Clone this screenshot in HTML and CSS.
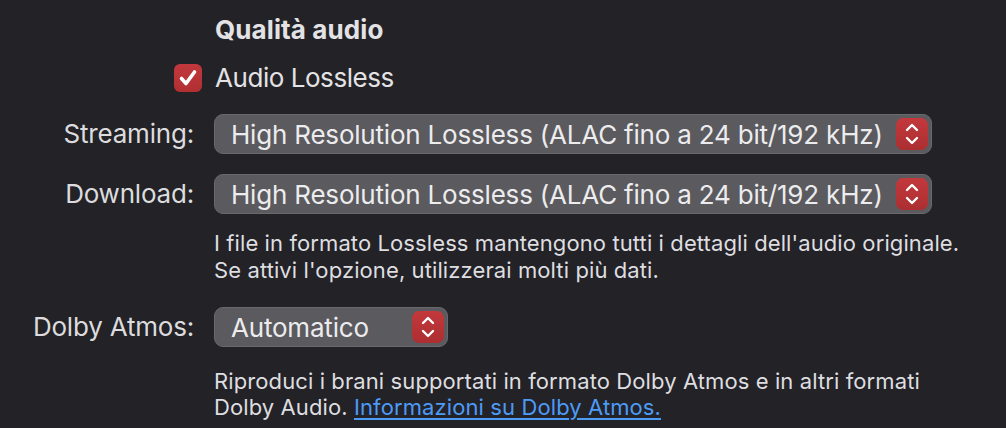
FILE: index.html
```html
<!DOCTYPE html>
<html lang="it">
<head>
<meta charset="utf-8">
<title>Qualità audio</title>
<link rel="stylesheet" href="styles.css">
</head>
<body>
<div class="form">
  <div class="label"></div>
  <div class="heading">Qualità audio</div>

  <div class="label check-cell">
    <span class="checkbox">
      <svg viewBox="0 0 28 28" width="28" height="28"><path d="M7.5 14.5 L12 19.5 L20.5 8" fill="none" stroke="#fff" stroke-width="3.6" stroke-linecap="round" stroke-linejoin="round"/></svg>
    </span>
  </div>
  <div class="check-text">Audio Lossless</div>

  <div class="label row-stream">Streaming:</div>
  <div class="popup wide row-stream"><span class="popup-text">High Resolution Lossless (ALAC fino a 24 bit/192 kHz)</span><span class="stepper"><svg viewBox="0 0 32 32" width="32" height="32"><path d="M11 12 L16 7 L21 12 M11 20 L16 25 L21 20" fill="none" stroke="#fff" stroke-width="2.4" stroke-linecap="round" stroke-linejoin="round"/></svg></span></div>

  <div class="label row-dl">Download:</div>
  <div class="popup wide row-dl"><span class="popup-text">High Resolution Lossless (ALAC fino a 24 bit/192 kHz)</span><span class="stepper"><svg viewBox="0 0 32 32" width="32" height="32"><path d="M11 12 L16 7 L21 12 M11 20 L16 25 L21 20" fill="none" stroke="#fff" stroke-width="2.4" stroke-linecap="round" stroke-linejoin="round"/></svg></span></div>

  <div class="label"></div>
  <p class="desc desc-lossless">I file in formato Lossless mantengono tutti i dettagli dell'audio originale.<br>Se attivi l'opzione, utilizzerai molti più dati.</p>

  <div class="label row-dolby">Dolby Atmos:</div>
  <div class="popup narrow row-dolby"><span class="popup-text">Automatico</span><span class="stepper"><svg viewBox="0 0 32 32" width="32" height="32"><path d="M11 12 L16 7 L21 12 M11 20 L16 25 L21 20" fill="none" stroke="#fff" stroke-width="2.4" stroke-linecap="round" stroke-linejoin="round"/></svg></span></div>

  <div class="label"></div>
  <p class="desc desc-dolby">Riproduci i brani supportati in formato Dolby Atmos e in altri formati<br>Dolby Audio. <a href="#" class="link">Informazioni su Dolby Atmos.</a></p>
</div>
</body>
</html>
```

FILE: styles.css
```css
html, body {
  margin: 0;
  padding: 0;
  background: #232227;
  height: 100%;
  overflow: hidden;
}

body {
  font-family: Inter, "Noto Sans", "DejaVu Sans", sans-serif;
  color: #e3e3e5;
  font-size: 26px;
  -webkit-font-smoothing: antialiased;
}

.form {
  display: grid;
  grid-template-columns: 194px 1fr;
  column-gap: 20px;
  align-items: center;
  padding-top: 14px;
}

.label {
  text-align: right;
  color: #dcdcde;
  line-height: 40px;
  letter-spacing: -0.2px;
}

.heading {
  font-size: 26px;
  font-weight: 700;
  line-height: 32px;
  padding-left: 1px;
  letter-spacing: 0.1px;
}

.check-cell {
  display: flex;
  justify-content: flex-end;
  margin-top: 18px;
  line-height: 0;
}

.checkbox {
  width: 28px;
  height: 28px;
  border-radius: 6px;
  background: linear-gradient(#c2383c, #b02f33);
  margin-right: -8px;
  display: block;
}

.checkbox svg {
  display: block;
}

.check-text {
  margin-top: 18px;
  line-height: 28px;
  padding-left: 1px;
  letter-spacing: -0.45px;
}

.row-stream {
  margin-top: 22px;
}

.row-dl {
  margin-top: 20px;
}

.popup {
  height: 40px;
  box-sizing: border-box;
  border-radius: 9px;
  background: #5b5a5e;
  border: 1px solid #69686c;
  display: flex;
  align-items: center;
  justify-content: space-between;
  padding: 0 3px 0 16px;
  letter-spacing: -0.2px;
}

.popup.wide {
  width: 718px;
}

.popup.narrow {
  width: 234px;
}

.popup-text {
  color: #ececee;
  white-space: nowrap;
}

.stepper {
  width: 32px;
  height: 32px;
  border-radius: 7px;
  background: linear-gradient(#c3393c, #ac2e31);
  display: block;
}

.stepper svg {
  display: block;
}

.desc {
  margin: 0;
  font-size: 22px;
  line-height: 27px;
  color: #dedee0;
  letter-spacing: 0.1px;
}

.desc-lossless {
  margin-top: 16px;
}

.row-dolby {
  margin-top: 23px;
}

.desc-dolby {
  margin-top: 21px;
  line-height: 26px;
}

.link {
  color: #4c9bf7;
  text-decoration: underline;
  text-underline-offset: 3px;
}
```
